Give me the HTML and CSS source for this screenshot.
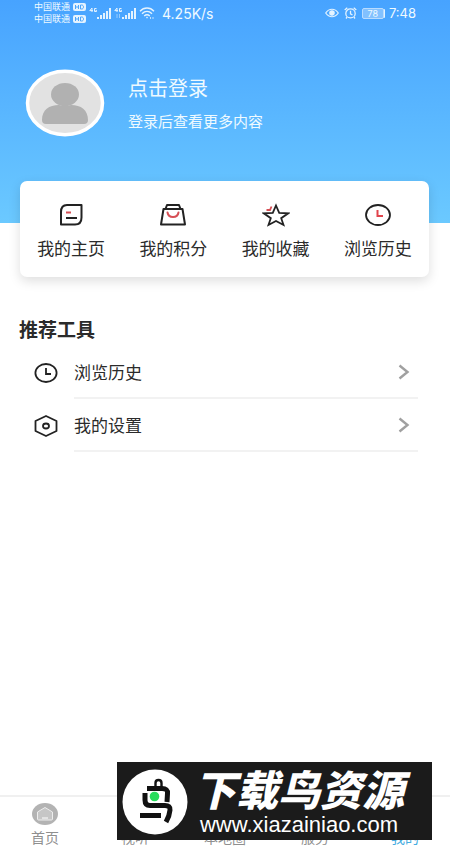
FILE: index.html
```html
<!DOCTYPE html>
<html lang="zh-CN">
<head>
<meta charset="utf-8">
<meta name="viewport" content="width=device-width, initial-scale=1">
<title>我的</title>
<link rel="stylesheet" href="styles.css">
</head>
<body>
<header class="hero">
  <div class="status">
    <div class="carriers">
      <div class="carrier">中国联通<svg width="13" height="8" viewBox="0 0 13 8"><rect width="13" height="8" rx="2" fill="#e4f3ff"/><path d="M2.5 2v4M5.5 2v4M2.5 4h3M7.5 2v4h1.2c2.4 0 2.4-4 0-4z" fill="none" stroke="#4ba5fb"/></svg></div>
      <div class="carrier">中国联通<svg width="13" height="8" viewBox="0 0 13 8"><rect width="13" height="8" rx="2" fill="#e4f3ff"/><path d="M2.5 2v4M5.5 2v4M2.5 4h3M7.5 2v4h1.2c2.4 0 2.4-4 0-4z" fill="none" stroke="#4ba5fb"/></svg></div>
    </div>
    <svg width="22" height="14" viewBox="0 0 22 14" fill="none" stroke="#e4f3ff"><path d="M3 6V2L.8 4.6H4M7.5 2.5H5.5v3h2V4.300h-1"/><path stroke-width="2" d="M9 13v-2M12 13V9M15 13V7M18 13V5M21 13V2"/></svg>
    <svg width="22" height="14" viewBox="0 0 22 14" fill="none" stroke="#e4f3ff"><path d="M3 6V2L.8 4.6H4M7.5 2.5H5.5v3h2V4.300h-1"/><path opacity=".5" d="M3 8v4M5.500 8v4"/><path stroke-width="2" d="M9 13v-2M12 13V9M15 13V7M18 13V5M21 13V2"/></svg>
    <svg width="16" height="12" viewBox="0 0 16 12" fill="none" stroke="#e4f3ff" stroke-width="1.4"><path d="M1 4.200c4-4.200 10-4.200 14 0M3 6.700c3-3 7-3 10 0M5.200 9c2-1.700 3.600-1.700 5.600 0"/><circle cx="8" cy="10.600" r=".8" fill="#e4f3ff" stroke="none"/><path d="M11 11h1M13.500 11h1"/></svg>
    <span class="speed">4.25K/s</span>
    <div class="status-right">
      <svg width="14" height="10" viewBox="0 0 14 10" fill="none" stroke="#e4f3ff" stroke-width="1.2"><path d="M.7 5c3.400-5 9.200-5 12.600 0-3.400 5-9.200 5-12.600 0z"/><circle cx="7" cy="5" r="2.200" fill="#e4f3ff"/></svg>
      <svg width="13" height="12" viewBox="0 0 13 12" fill="none" stroke="#e4f3ff" stroke-width="1.3"><ellipse cx="6.500" cy="6.400" rx="4.700" ry="4.500"/><path d="M.7 3 3.300.8M12.300 3 9.700.8M6.500 3.800v3l2 1.200M3 10.200l-1 1.300M10 10.200l1 1.300"/></svg>
      <span class="battery">78</span>
      <span class="time">7:48</span>
    </div>
  </div>
  <a class="profile" href="#login">
    <svg width="80" height="68" viewBox="0 0 80 68"><ellipse cx="40" cy="34" rx="37.500" ry="31.700" fill="#e2e2e2" stroke="#fff" stroke-width="3.500"/><ellipse cx="40" cy="25.500" rx="14" ry="11.500" fill="#b1b1b1"/><path d="M17 51C17 41 24 36 34 36q6 2 12 0c10 0 17 5 17 15q0 4-4 4H21q-4 0-4-4z" fill="#b1b1b1"/></svg>
    <span class="profile-text">
      <span class="login">点击登录</span>
      <span class="hint">登录后查看更多内容</span>
    </span>
  </a>
</header>
<main>
  <nav class="card">
    <a href="#home"><svg width="28" height="24" viewBox="0 0 28 24" fill="none" stroke="#222" stroke-width="2"><path d="M10 2h14.500v12.500c0 4.500-2.500 7-6.500 7H4V9c0-4.500 2-7 6-7z" stroke-linejoin="round"/><path d="M9 15h11"/><path d="M9 9.500h5" stroke="#d64f55"/></svg>我的主页</a>
    <a href="#points"><svg width="28" height="24" viewBox="0 0 28 24" fill="none" stroke="#222" stroke-width="2" stroke-linejoin="round"><path d="M4.500 6h19L26 21.500H2zM6.500 6l1.500-4h12l1.500 4"/><path d="M8.500 9.500c1 6 10 6 11 0" stroke="#d64f55" stroke-linecap="round"/></svg>我的积分</a>
    <a href="#favorites"><svg width="28" height="24" viewBox="0 0 28 24" fill="none" stroke="#222" stroke-width="1.8"><path d="m14 2.500 3.200 7.300 9 .5-7 4.900 2.300 6.800-7.500-4-7.500 4 2.300-6.800-7-4.900 9-.5z"/><path d="M9.500 3.500 8 7H4.500" stroke="#d64f55"/></svg>我的收藏</a>
    <a href="#history"><svg width="28" height="24" viewBox="0 0 28 24" fill="none" stroke="#222" stroke-width="1.8"><ellipse cx="14" cy="12" rx="12" ry="10"/><path d="M13.500 7v6H19" stroke="#e1444c" stroke-width="2"/></svg>浏览历史</a>
  </nav>
  <section class="tools">
    <h2>推荐工具</h2>
    <ul>
      <li><svg width="24" height="22" viewBox="0 0 24 22" fill="none" stroke="#222" stroke-width="1.8"><ellipse cx="12" cy="11" rx="10.600" ry="9"/><path d="M12 6v6h5"/></svg><a href="#history">浏览历史<svg width="12" height="16" viewBox="0 0 12 16" fill="none" stroke="#a0a0a0" stroke-width="2.400"><path d="m1.500 1.500 8 6.500-8 6.500"/></svg></a></li>
      <li><svg width="24" height="22" viewBox="0 0 24 22" fill="none" stroke="#222" stroke-width="1.8" stroke-linejoin="round"><path d="m12 1 10.500 5v10L12 21 1.500 16V6z"/><ellipse cx="12" cy="11" rx="3" ry="2.500"/></svg><a href="#settings">我的设置<svg width="12" height="16" viewBox="0 0 12 16" fill="none" stroke="#a0a0a0" stroke-width="2.400"><path d="m1.500 1.500 8 6.500-8 6.500"/></svg></a></li>
    </ul>
  </section>
</main>
<footer>
  <nav class="tabs">
    <a href="#index"><svg width="28" height="24" viewBox="0 0 28 24"><ellipse cx="14" cy="12" rx="13" ry="11" fill="#b3b3b3"/><path d="m6.500 10 7.500-4.500 7.500 4.500v7q0 1-1 1h-13q-1 0-1-1z" fill="#c6c6c6" stroke="#eee"/><path d="M11 16h6" stroke="#fff"/></svg>首页</a>
    <a href="#media"><i></i>视听</a>
    <a href="#map"><i></i>本地圈</a>
    <a href="#service"><i></i>服务</a>
    <a class="active" href="#mine"><i></i>我的</a>
  </nav>
  <div class="brand">
    <svg width="66" height="66" viewBox="0 0 66 66"><circle cx="33" cy="33" r="32.500" fill="#fff"/><g fill="none" stroke="#111" stroke-width="5"><path d="M25 19.500h15q6 0 5.500 5L45 33"/><path d="M23 24v7q0 5.500 5 5.500h15q5.500 0 5 4.500-.5 6-4 12"/><path d="M18 46.500h21"/><path d="M33.500 18v-4q0-3 3-3t3 3v4" stroke-width="2.400"/></g><circle cx="32.500" cy="27.500" r="4.800" fill="#27dc5b"/></svg>
    <div class="brand-text"><strong>下载鸟资源</strong><span>www.xiazainiao.com</span></div>
  </div>
</footer>
</body>
</html>
```
FILE: styles.css
```css
* { box-sizing: border-box; }
body {
  margin: 0;
  min-height: 100vh;
  display: flex;
  flex-direction: column;
  background: #fff;
  color: #2b2b2b;
  font-family: "Noto Sans", "Noto Sans CJK SC", sans-serif;
  font-size: 17px;
}
a { color: inherit; text-decoration: none; }
svg { display: block; flex: none; }

.hero {
  padding-bottom: 86px;
  background: linear-gradient(#47a3ff, #6bc9ff);
  color: #effaff;
}
.status {
  display: flex;
  align-items: center;
  gap: 3px;
  height: 26px;
  padding: 0 34px;
}
.carrier {
  display: flex;
  align-items: center;
  gap: 3px;
  font-size: 9px;
  line-height: 12px;
}
.speed, .time {
  font-family: Inter, sans-serif;
  font-size: 13px;
}
.speed { margin-left: 4px; font-size: 14px; }
.status-right {
  display: flex;
  align-items: center;
  gap: 5px;
  margin-left: auto;
}
.battery {
  width: 22px;
  border: 1px solid #b9dcff;
  border-radius: 2px;
  background: #82c1ff;
  box-shadow: 2px 0 0 -1px #e4f3ff;
  font: 9px/9px Inter, sans-serif;
  text-align: center;
}

.profile {
  display: flex;
  align-items: center;
  gap: 23px;
  margin-top: 43px;
  padding: 0 25px;
}
.profile-text {
  display: flex;
  flex-direction: column;
  gap: 8px;
}
.login { font-size: 20px; line-height: 28px; }
.hint { font-size: 15px; line-height: 20px; }

main { flex: 1; }
.card {
  display: grid;
  grid-template-columns: repeat(4, 1fr);
  position: relative;
  margin: -42px 21px 0 20px;
  padding: 22px 0 16px;
  border-radius: 7px;
  background: #fff;
  box-shadow: 0 4px 12px #0002;
}
.card a {
  display: flex;
  flex-direction: column;
  align-items: center;
  gap: 10px;
  line-height: 24px;
}

.tools { padding: 40px 32px 0 19px; }
h2 {
  margin: 0;
  font-size: 19px;
  line-height: 26px;
}
ul {
  margin: 0;
  padding: 3px 0 0 15px;
  list-style: none;
}
li {
  display: flex;
  align-items: center;
  gap: 16px;
}
li a {
  flex: 1;
  display: flex;
  align-items: center;
  justify-content: space-between;
  height: 53px;
  padding-right: 8px;
  border-bottom: 2px solid #f2f2f2;
}

footer { position: relative; }
.tabs {
  display: grid;
  grid-template-columns: repeat(5, 1fr);
  padding: 5px 0 0;
  border-top: 2px solid #f0f0f0;
  color: #8f8f8f;
  font-size: 14px;
}
.tabs a {
  display: flex;
  flex-direction: column;
  align-items: center;
  line-height: 24px;
}
.tabs i { height: 24px; }
.tabs .active { color: #46ace0; }
.brand {
  position: absolute;
  right: 18px;
  bottom: 10px;
  display: flex;
  align-items: center;
  gap: 6px;
  width: 315px;
  height: 78px;
  padding: 2px 0 0 5px;
  background: #1b1b1b;
  color: #fff;
}
.brand-text {
  display: flex;
  flex-direction: column;
  align-items: center;
  padding-top: 6px;
}
.brand strong {
  font-size: 42px;
  font-style: italic;
  font-weight: 900;
  line-height: 40px;
}
.brand span {
  font-family: "Liberation Sans", sans-serif;
  font-size: 22px;
  line-height: 30px;
}
```
